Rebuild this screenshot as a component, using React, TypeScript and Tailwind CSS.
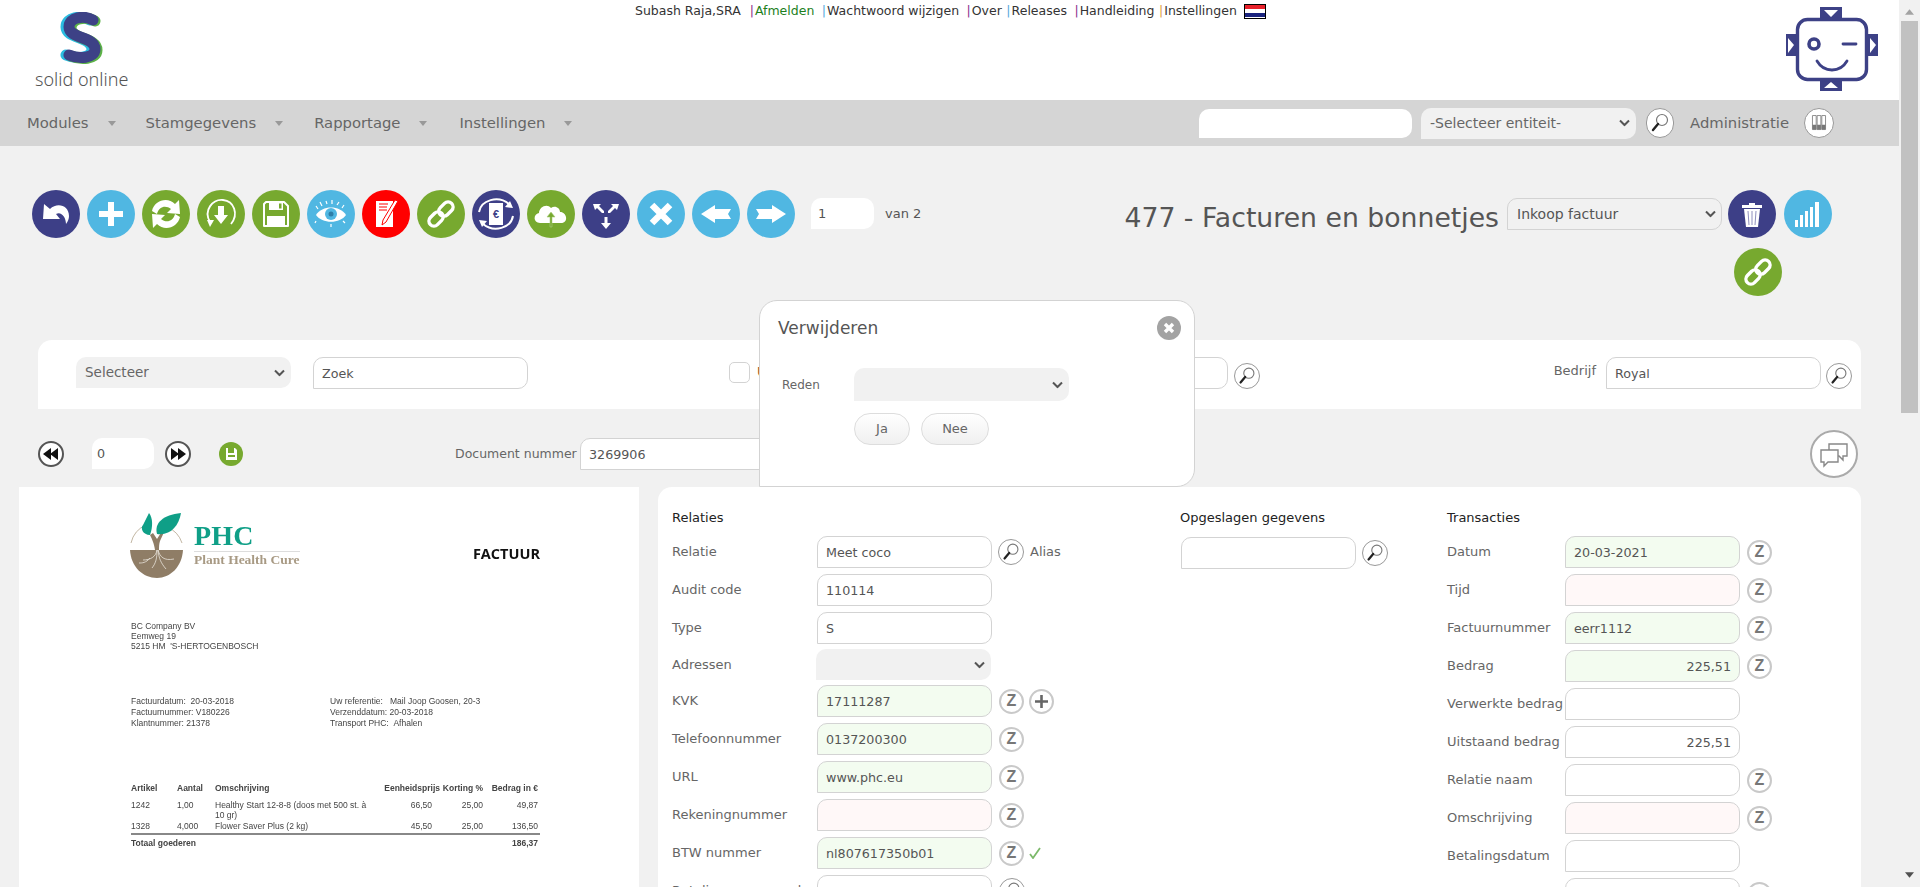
import type { ReactNode } from 'react'

const navy = 'bg-[#3d3f87]'
const blue = 'bg-[#50b7e2]'
const green = 'bg-[#77a92f]'

const Round = ({ bg, children }: { bg: string; children: ReactNode }) => (
	<div className={`w-12 h-12 shrink-0 rounded-full ${bg}`}>
		<svg viewBox="0 0 48 48" className="w-12 h-12">
			{children}
		</svg>
	</div>
)

const LinkGlyph = () => (
	<g transform="rotate(-45 24 24)" fill="none" stroke="#fff" strokeWidth="3.4">
		<rect x="9" y="19" width="16" height="10" rx="5" />
		<rect x="23" y="19" width="16" height="10" rx="5" />
	</g>
)

const toolbarIcons: { bg: string; glyph: ReactNode }[] = [
	{ bg: navy, glyph: <path fill="#fff" d="M11 29 L12 14 L18 19 C25 12 37 15 37 26 C37 29 36 31 34 34 C34 27 29 21 24 24 L28 29 Z" /> },
	{ bg: blue, glyph: <path fill="#fff" d="M21 12 H27 V21 H36 V27 H27 V36 H21 V27 H12 V21 H21 Z" /> },
	{
		bg: green,
		glyph: (
			<g fill="#fff">
				<path d="M10 21 C12 11 25 6 33 14 L37 10 L38 24 L25 23 L29 19 C24 15 17 16 15 24 Z" />
				<path d="M38 27 C36 37 23 42 15 34 L11 38 L10 24 L23 25 L19 29 C24 33 31 32 33 24 Z" />
			</g>
		),
	},
	{
		bg: green,
		glyph: (
			<g>
				<path d="M13 32 C6 20 16 9 26 10 C37 11 42 24 34 34" fill="none" stroke="#fff" strokeWidth="1.8" />
				<path d="M10 30 L17 30 L13 37 Z" fill="#fff" />
				<path d="M21 16 H27 V25 H31 L24 34 L17 25 H21 Z" fill="#fff" />
			</g>
		),
	},
	{
		bg: green,
		glyph: (
			<g>
				<path d="M14 12 H32 L36 16 V36 H12 V14 Z" fill="none" stroke="#fff" strokeWidth="2" strokeLinejoin="round" />
				<path d="M17 12 H31 V20 H17 Z M15 26 H33 V36 H15 Z" fill="#fff" />
				<rect x="27" y="13.5" width="2.5" height="5" fill="#77a92f" />
			</g>
		),
	},
	{
		bg: blue,
		glyph: (
			<g>
				<path d="M9 25 C15 15 33 15 39 25 C33 34 15 34 9 25 Z" fill="#fff" />
				<circle cx="24" cy="24" r="6" fill="#50b7e2" />
				<circle cx="24" cy="24" r="2.5" fill="#2f7fa8" />
				<path d="M11 19 L9 16 M15 16 L13 12 M20 14 L19 11 M25 14 L25 10 M30 15 L32 12 M35 18 L37 15 M9 31 L8 33 M24 34 L24 37 M36 31 L38 33" stroke="#fff" strokeWidth="1.2" />
			</g>
		),
	},
	{
		bg: 'bg-[#ff0000]',
		glyph: (
			<g>
				<path d="M14 11 H31 V37 H14 Z" fill="#fff" />
				<path d="M17 14 H26 M17 17 H25 M17 20 H25" stroke="#ff0000" strokeWidth="1.2" />
				<path d="M33 10 L36 11 L24 32 L20 35 L21 30 Z" fill="#fff" stroke="#ff0000" strokeWidth="1" />
			</g>
		),
	},
	{ bg: green, glyph: <LinkGlyph /> },
	{
		bg: navy,
		glyph: (
			<g>
				<path d="M7 22 C9 10 26 5 37 14 M41 26 C39 38 22 43 11 34" fill="none" stroke="#fff" strokeWidth="2" />
				<path d="M33 17 L41 18 L38 11 Z M15 31 L7 30 L10 37 Z" fill="#fff" />
				<path d="M17 13 H31 V35 H17 Z" fill="#fff" />
				<text x="24" y="28" textAnchor="middle" fontSize="11" fontWeight="700" fill="#3d3f87" fontFamily="'Liberation Sans', sans-serif">
					€
				</text>
			</g>
		),
	},
	{
		bg: green,
		glyph: (
			<g>
				<path d="M13 33 C6 33 6 24 12 23 C12 17 20 13 24 18 C28 15 33 18 33 22 C40 22 42 33 34 33 Z" fill="#fff" />
				<path d="M23 37 V27 H20 L24 22 L28 27 H25 V37 Z" fill="#77a92f" stroke="#a9cd7c" strokeWidth="0.6" />
			</g>
		),
	},
	{
		bg: navy,
		glyph: (
			<g fill="#fff">
				<path d="M11 14 H19 L17 16 L22 21 V23 H20 L15 18 L13 20 Z" />
				<path d="M37 14 H29 L31 16 L26 21 V23 H28 L33 18 L35 20 Z" />
				<path d="M22.5 27 H25.5 V33 H29 L24 39 L19 33 H22.5 Z" />
			</g>
		),
	},
	{
		bg: blue,
		glyph: (
			<g stroke="#fff" strokeWidth="6.5">
				<path d="M15 15 L33 33 M33 15 L15 33" />
			</g>
		),
	},
	{ bg: blue, glyph: <path fill="#fff" d="M9 24 L23 15 V19 H39 L36 24 L39 29 H23 V33 Z" /> },
	{ bg: blue, glyph: <path fill="#fff" d="M39 24 L25 15 V19 H9 L12 24 L9 29 H25 V33 Z" /> },
]

const SearchIcon = ({ className = 'w-[26px] h-[26px]' }: { className?: string }) => (
	<div className={`shrink-0 rounded-full border border-[#999] bg-white ${className}`}>
		<svg viewBox="0 0 26 26" className="w-full h-full">
			<circle cx="15" cy="10" r="5.5" fill="none" stroke="#777" strokeWidth="1.2" />
			<path d="M11 14 L6 20" stroke="#222" strokeWidth="2.4" strokeLinecap="round" />
		</svg>
	</div>
)

const ZIcon = () => (
	<div className="w-[25px] h-[25px] shrink-0 rounded-full border-2 border-[#c9c9c9] bg-white flex items-center justify-center font-['Liberation_Sans',sans-serif] text-[16px] leading-none font-bold text-[#777]">
		Z
	</div>
)

const PlusIcon = () => (
	<div className="w-[25px] h-[25px] shrink-0 rounded-full border-2 border-[#c9c9c9] bg-white">
		<svg viewBox="0 0 21 21" className="w-full h-full">
			<path d="M10.5 4 V17 M4 10.5 H17" stroke="#666" strokeWidth="2.6" />
		</svg>
	</div>
)

const Dropdown = ({
	value,
	className,
	textClass = 'text-[14px] text-[#666]',
	border = false,
}: {
	value?: string
	className: string
	textClass?: string
	border?: boolean
}) => (
	<div className={`relative shrink-0 ${className}`}>
		<select
			className={`appearance-none w-full h-full px-[9px] rounded-[10px] rounded-bl-none outline-none ${border ? 'border border-[#d3d3d3]' : 'bg-[#f1f1f1]'} ${textClass}`}
		>
			{value && <option>{value}</option>}
		</select>
		<svg viewBox="0 0 11 7" className="absolute right-[6px] top-1/2 -translate-y-1/2 w-[11px] h-[7px] pointer-events-none">
			<path d="M1 1 L5.5 5.5 L10 1" fill="none" stroke="#555" strokeWidth="2" />
		</svg>
	</div>
)

const Field = ({
	value = '',
	tone = 'white',
	right = false,
	className = 'w-[175px]',
}: {
	value?: string
	tone?: 'white' | 'green' | 'pink'
	right?: boolean
	className?: string
}) => {
	const bg = tone === 'green' ? 'bg-[#f3fcf0]' : tone === 'pink' ? 'bg-[#fff8f8]' : 'bg-white'
	return (
		<input
			readOnly
			value={value}
			className={`h-8 shrink-0 px-2 text-[12.7px] text-[#555] border border-[#d3d3d3] rounded-[10px] rounded-bl-none outline-none ${bg} ${right ? 'text-right' : ''} ${className}`}
		/>
	)
}

const Row = ({ label, labelWidth, children }: { label: string; labelWidth: string; children: ReactNode }) => (
	<div className="flex items-center h-8 mb-1.5">
		<span className={`shrink-0 text-[13px] text-[#666] whitespace-nowrap ${labelWidth}`}>{label}</span>
		{children}
	</div>
)

const Relaties = () => {
	const w = 'w-[145px]'
	return (
		<div className="w-[508px] shrink-0">
			<h3 className="h-5 mb-2 text-[13px] leading-5 text-[#222]">Relaties</h3>
			<Row label="Relatie" labelWidth={w}>
				<Field value="Meet coco" />
				<div className="ml-1.5">
					<SearchIcon />
				</div>
				<span className="ml-1.5 text-[13px] text-[#666]">Alias</span>
			</Row>
			<Row label="Audit code" labelWidth={w}>
				<Field value="110114" />
			</Row>
			<Row label="Type" labelWidth={w}>
				<Field value="S" />
			</Row>
			<div className="flex items-center h-[31px] -mt-px mb-[5px]">
				<span className={`shrink-0 text-[13px] text-[#666] ${w}`}>Adressen</span>
				<Dropdown className="w-[175px] h-[31px] -ml-px" />
			</div>
			<Row label="KVK" labelWidth={w}>
				<Field value="17111287" tone="green" />
				<div className="ml-[7px] flex gap-[5px]">
					<ZIcon />
					<PlusIcon />
				</div>
			</Row>
			{[
				{ label: 'Telefoonnummer', value: '0137200300', tone: 'green' as const },
				{ label: 'URL', value: 'www.phc.eu', tone: 'green' as const },
				{ label: 'Rekeningnummer', value: '', tone: 'pink' as const },
			].map((r) => (
				<Row key={r.label} label={r.label} labelWidth={w}>
					<Field value={r.value} tone={r.tone} />
					<div className="ml-[7px]">
						<ZIcon />
					</div>
				</Row>
			))}
			<Row label="BTW nummer" labelWidth={w}>
				<Field value="nl807617350b01" tone="green" />
				<div className="ml-[7px]">
					<ZIcon />
				</div>
				<svg viewBox="0 0 12 12" className="w-3 h-3 ml-[5px]">
					<path d="M1 7 L4 11 L11 1" fill="none" stroke="#7cb96a" strokeWidth="1.8" />
				</svg>
			</Row>
			<Row label="Betalingsvoorwaarde" labelWidth={w}>
				<Field />
				<div className="ml-[7px]">
					<SearchIcon />
				</div>
			</Row>
		</div>
	)
}

const transacties: { label: string; value?: string; tone?: 'green' | 'pink'; right?: boolean; z: boolean }[] = [
	{ label: 'Datum', value: '20-03-2021', tone: 'green', z: true },
	{ label: 'Tijd', tone: 'pink', z: true },
	{ label: 'Factuurnummer', value: 'eerr1112', tone: 'green', z: true },
	{ label: 'Bedrag', value: '225,51', tone: 'green', right: true, z: true },
	{ label: 'Verwerkte bedrag', z: false },
	{ label: 'Uitstaand bedrag', value: '225,51', right: true, z: false },
	{ label: 'Relatie naam', z: true },
	{ label: 'Omschrijving', tone: 'pink', z: true },
	{ label: 'Betalingsdatum', z: false },
	{ label: 'Vervaldatum', z: true },
]

const InvoicePreview = () => (
	<div className="w-[620px] shrink-0 bg-white pl-[112px] pt-[26px] font-['Liberation_Sans',sans-serif] text-[8.5px] leading-[10px] text-[#444] blur-[0.35px]">
		<div className="w-[409px] flex items-start">
			<svg viewBox="0 0 54 66" className="w-[54px] h-[66px] shrink-0 -ml-px">
				<path d="M1 30 A26 26 0 0 1 16 12 M37 14 A26 26 0 0 1 52 30" fill="none" stroke="#b3a38c" strokeWidth="0.8" />
				<path d="M0 37 H53 C52 54 40 65 27 65 C13 65 1 54 0 37 Z" fill="#8f7d66" />
				<path d="M25 37 C24 30 22 26 20 22 L23 20 L27 26 L34 15 L35 17 L30 28 C29 31 29 34 29 37 Z" fill="#8f7d66" />
				<path d="M20 22 C13 22 10 15 13 12 L19 0 C23 5 23 14 20 22 Z" fill="#0f9f87" />
				<path d="M27 21 C24 10 33 2 51 0 C49 13 40 23 27 21 Z" fill="#0f9f87" />
				<path d="M27 37 C26 44 20 47 13 47 M27 37 C27 45 26 50 22 55 M28 37 C30 44 34 48 44 46 M28 37 C29 46 31 50 36 56 M20 45 C16 50 12 50 9 50" fill="none" stroke="#e9e3da" strokeWidth="0.8" />
			</svg>
			<div className="ml-2.5 w-[106px] mt-2.5 font-['Liberation_Serif',serif] font-bold">
				<div className="text-[28px] leading-[25px] text-[#0f9f87] tracking-[0.2px]">PHC</div>
				<div className="mt-[3px] border-t border-[#ddd] text-[13.5px] leading-[15px] text-[#a89a84] whitespace-nowrap">
					Plant Health Cure
				</div>
			</div>
			<div className="ml-auto mt-[31px] font-['Open_Sans',sans-serif] font-bold text-[#111] text-[14.5px] leading-5">FACTUUR</div>
		</div>
		<div className="mt-[42px]">
			<div>BC Company BV</div>
			<div>Eemweg 19</div>
			<div>5215 HM &nbsp;'S-HERTOGENBOSCH</div>
		</div>
		<div className="mt-[45px] flex leading-[11px]">
			<div className="w-[199px]">
				<div>Factuurdatum: &nbsp;20-03-2018</div>
				<div>Factuurnummer: V180226</div>
				<div>Klantnummer: 21378</div>
			</div>
			<div>
				<div>Uw referentie: &nbsp; Mail Joop Goosen, 20-3</div>
				<div>Verzenddatum: 20-03-2018</div>
				<div>Transport PHC: &nbsp;Afhalen</div>
			</div>
		</div>
		<div className="mt-[54px] w-[409px]">
			<div className="grid grid-cols-[46px_38px_162px_63px_43px_55px] font-bold mb-[7px]">
				<span>Artikel</span>
				<span>Aantal</span>
				<span>Omschrijving</span>
				<span className="text-right whitespace-nowrap">Eenheidsprijs</span>
				<span className="text-right whitespace-nowrap">Korting %</span>
				<span className="text-right whitespace-nowrap">Bedrag in €</span>
			</div>
			<div className="grid grid-cols-[46px_38px_162px_63px_43px_55px]">
				<span>1242</span>
				<span>1,00</span>
				<span>Healthy Start 12-8-8 (doos met 500 st. à 10 gr)</span>
				<span className="text-right pr-2">66,50</span>
				<span className="text-right">25,00</span>
				<span className="text-right">49,87</span>
				<span className="mt-px">1328</span>
				<span className="mt-px">4,000</span>
				<span className="mt-px">Flower Saver Plus (2 kg)</span>
				<span className="mt-px text-right pr-2">45,50</span>
				<span className="mt-px text-right">25,00</span>
				<span className="mt-px text-right">136,50</span>
			</div>
			<div className="mt-0.5 border-t-2 border-[#888] pt-[3px] pr-0.5 flex justify-between font-bold">
				<span>Totaal goederen</span>
				<span>186,37</span>
			</div>
		</div>
	</div>
)

const Modal = () => (
	<div className="absolute left-[759px] top-[300px] w-[436px] h-[187px] bg-white border border-[#d3d3d3] rounded-[18px] rounded-bl-none">
		<div className="flex items-center justify-between pt-[13px] pl-[18px] pr-[13px]">
			<h2 className="text-[17px] leading-7 text-[#555]">Verwijderen</h2>
			<div className="w-6 h-6 rounded-full bg-[#a3a3a3]">
				<svg viewBox="0 0 24 24" className="w-6 h-6">
					<path d="M8 8 L16 16 M16 8 L8 16" stroke="#fff" strokeWidth="3.4" />
				</svg>
			</div>
		</div>
		<div className="mt-[26px] flex items-center">
			<span className="w-[94px] pl-[22px] text-[12px] text-[#666]">Reden</span>
			<Dropdown className="w-[215px] h-[33px]" />
		</div>
		<div className="ml-[94px] mt-3 flex gap-[11px]">
			<button className="w-14 h-8 rounded-full border border-[#ddd] bg-gradient-to-b from-white to-[#f0f0f0] text-[13px] text-[#666]">Ja</button>
			<button className="w-[68px] h-8 rounded-full border border-[#ddd] bg-gradient-to-b from-white to-[#f0f0f0] text-[13px] text-[#666]">Nee</button>
		</div>
	</div>
)

const Seek = ({ flip = false }: { flip?: boolean }) => (
	<div className="w-[26px] h-[26px] shrink-0 rounded-full border-2 border-[#555] bg-white">
		<svg viewBox="0 0 22 22" className={`w-full h-full ${flip ? 'rotate-180' : ''}`}>
			<path d="M3 11 L11 5 V17 Z M10 11 L18 5 V17 Z" fill="#111" />
		</svg>
	</div>
)

const menu = [
	{ name: 'Modules', ml: 'ml-[27px]' },
	{ name: 'Stamgegevens', ml: 'ml-[30px]' },
	{ name: 'Rapportage', ml: 'ml-[31px]' },
	{ name: 'Instellingen', ml: 'ml-[32px]' },
]

const logoPath = 'M33 8 C24 3 9 5 9 15 C9 27 35 24 35 37 C35 47 18 47 9 43'

export default function App() {
	return (
		<div className="relative flex h-[887px] w-[1920px] overflow-hidden bg-[#f1f1f1] font-['DejaVu_Sans',sans-serif] text-[#555]">
			<div className="w-[1899px] shrink-0">
				<header className="h-[100px] bg-white flex items-start">
					<div className="ml-[35px] w-[92px] shrink-0 pt-3">
						<svg viewBox="0 0 44 53" className="w-11 h-[53px] ml-[25px]">
							<g fill="none" strokeWidth="11" strokeLinecap="round">
								<path transform="translate(-3 0)" stroke="#2bbce0" d={logoPath} />
								<path transform="translate(2 1)" stroke="#5cb247" d={logoPath} />
								<path stroke="#3d4186" d={logoPath} />
							</g>
						</svg>
						<div className="text-[18px] leading-[22px] mt-[3px] whitespace-nowrap text-[#555] font-['Noto_Sans',sans-serif] font-light">solid online</div>
					</div>
					<nav className="ml-[508px] mt-[3px] flex items-center text-[12.5px] leading-4 text-[#333] whitespace-nowrap">
						<span>Subash Raja,SRA</span>
						<span className="ml-[9px] mr-px text-[#8b2f8b]">|</span>
						<span className="text-[#1d7f1d]">Afmelden</span>
						<span className="ml-[7.5px] mr-px text-[#53a7dc]">|</span>
						<span>Wachtwoord wijzigen</span>
						<span className="ml-[7.5px] mr-px text-[#8b2f8b]">|</span>
						<span>Over</span>
						<span className="ml-[4.5px] mr-px text-[#53a7dc]">|</span>
						<span>Releases</span>
						<span className="ml-[7.5px] mr-px text-[#8b2f8b]">|</span>
						<span>Handleiding</span>
						<span className="ml-[4.5px] mr-px text-[#e09a3a]">|</span>
						<span>Instellingen</span>
						<span className="ml-[7.5px] flex flex-col w-[22px] h-[15px] border border-black">
							<span className="flex-1 bg-[#e8212b]" />
							<span className="flex-1 bg-white" />
							<span className="flex-1 bg-[#1a237e]" />
						</span>
					</nav>
					<svg viewBox="0 0 92 85" className="w-[92px] h-[85px] ml-auto mr-[21px] mt-[7px] shrink-0">
						<g fill="#3d4186">
							<path d="M34 0 H56 V11 H34 Z M0 27 H10 V49 H0 Z M82 27 H92 V49 H82 Z M34 73 H56 V84 H34 Z" />
						</g>
						<g fill="#fff">
							<path d="M38 3 H52 L45 10 Z M2 31 L8 38 L2 46 Z M90 38 L84 31 V46 Z M38 81 H52 L45 75 Z" />
						</g>
						<rect x="11.5" y="12.5" width="69" height="60" rx="10" fill="#fff" stroke="#3d4186" strokeWidth="3.4" />
						<circle cx="28" cy="37" r="5" fill="none" stroke="#3d4186" strokeWidth="3.6" />
						<path d="M57 37 H70" stroke="#3d4186" strokeWidth="2.8" strokeLinecap="round" />
						<path d="M31 54 C38 66 54 66 61 54" fill="none" stroke="#3d4186" strokeWidth="2.8" strokeLinecap="round" />
					</svg>
				</header>

				<div className="h-[46px] bg-[#d5d5d5] flex items-center text-[14.8px] text-[#666] whitespace-nowrap">
					{menu.map((m) => (
						<div key={m.name} className={`flex items-center ${m.ml}`}>
							<span>{m.name}</span>
							<svg viewBox="0 0 8 5" className="w-2 h-[5px] ml-[19px]">
								<path d="M0 0 H8 L4 5 Z" fill="#999" />
							</svg>
						</div>
					))}
					<input readOnly className="ml-auto w-[213px] h-[29px] bg-white rounded-[10px] rounded-bl-none outline-none" />
					<Dropdown value="-Selecteer entiteit-" className="ml-[9px] w-[215px] h-[31px]" />
					<div className="ml-[10px]">
						<SearchIcon className="w-[28px] h-[30px]" />
					</div>
					<span className="ml-4">Administratie</span>
					<div className="ml-[15px] mr-[65px] w-[30px] h-[30px] rounded-full border border-[#999] bg-white">
						<svg viewBox="0 0 30 30" className="w-full h-full">
							<path d="M8 7 H12 V22 H8 Z M13 7 H17 V22 H13 Z M18 7 H22 V22 H18 Z" fill="none" stroke="#888" strokeWidth="1" />
							<path d="M8 17 H12 V22 H8 Z M13 17 H17 V22 H13 Z M18 17 H22 V22 H18 Z" fill="#777" />
						</svg>
					</div>
				</div>

				<section className="h-[194px] pt-[44px] pl-8 pr-[67px] flex items-start">
					<div className="flex gap-[7px]">
						{toolbarIcons.map((icon, i) => (
							<Round key={i} bg={icon.bg}>
								{icon.glyph}
							</Round>
						))}
					</div>
					<input readOnly value="1" className="ml-4 mt-2 w-[63px] h-[31px] px-[7px] bg-white rounded-[10px] rounded-bl-none text-[13px] text-[#555] outline-none" />
					<span className="ml-[11px] mt-4 text-[13px] leading-4">van 2</span>
					<div className="ml-auto flex flex-col">
						<div className="flex items-start">
							<h1 className="mt-2.5 text-[26.7px] leading-9 whitespace-nowrap text-[#555]">477 - Facturen en bonnetjes</h1>
							<Dropdown value="Inkoop factuur" border textClass="text-[14px] text-[#555]" className="ml-2 mt-2 w-[215px] h-8" />
							<div className="ml-1.5">
								<Round bg={navy}>
									<g>
										<path d="M14 15 H34 V18 H14 Z M21 13 H27 V15 H21 Z" fill="#fff" />
										<path d="M16 19 H32 L30 37 H18 Z" fill="#fff" />
										<path d="M20 21 L21 35 M24 21 V35 M28 21 L27 35" stroke="#8f90bd" strokeWidth="1" />
									</g>
								</Round>
							</div>
							<div className="ml-2">
								<Round bg={blue}>
									<path d="M11 30 H14 V37 H11 Z M16 25 H19 V37 H16 Z M21 21 H24 V37 H21 Z M26 17 H29 V37 H26 Z M31 12 H35 V37 H31 Z" fill="#fff" />
								</Round>
							</div>
						</div>
						<div className="mt-2.5 self-end mr-[50px]">
							<Round bg={green}>
								<LinkGlyph />
							</Round>
						</div>
					</div>
				</section>

				<section className="ml-[38px] w-[1823px] h-[69px] bg-white rounded-t-[14px] flex items-start pt-[17px] text-[13px]">
					<Dropdown value="Selecteer" textClass="text-[13.5px] text-[#666]" className="ml-[38px] w-[215px] h-[31px]" />
					<Field value="Zoek" className="ml-[22px] w-[215px]" />
					<div className="ml-[201px] mt-[5px] w-[21px] h-[21px] rounded-[5px] border border-[#d3d3d3] bg-white" />
					<span className="ml-[7px] mt-[5px] text-[#a8582b]">Uitgesloten</span>
					<input readOnly className="ml-auto w-[220px] h-[32px] border border-[#d3d3d3] rounded-[10px] rounded-bl-none outline-none" />
					<div className="ml-1.5 mt-1.5">
						<SearchIcon />
					</div>
					<span className="ml-[294px] mt-1 text-[#666]">Bedrijf</span>
					<Field value="Royal" className="ml-[10px] w-[215px]" />
					<div className="ml-[5px] mr-[9px] mt-1.5">
						<SearchIcon />
					</div>
				</section>

				<section className="h-[78px] pl-[38px] pr-[41px] flex items-start pt-[29px]">
					<div className="mt-[3px]">
						<Seek />
					</div>
					<input readOnly value="0" className="ml-[28px] w-[62px] h-[31px] px-[5px] bg-white rounded-[10px] rounded-bl-none text-[12.7px] text-[#555] outline-none" />
					<div className="ml-[11px] mt-[3px]">
						<Seek flip />
					</div>
					<div className="ml-[28px] mt-1 w-6 h-6 rounded-full bg-[#77a92f]">
						<svg viewBox="0 0 24 24" className="w-6 h-6">
							<path d="M7 6 H16 L18 8 V18 H7 Z" fill="#fff" />
							<path d="M9 6 H15 V11 H9 Z M9 13 H16 V15 H9 Z" fill="#77a92f" />
						</svg>
					</div>
					<span className="ml-[212px] mt-[7px] w-[121px] text-[12.5px] text-[#666] whitespace-nowrap">Document nummer</span>
					<Field value="3269906" className="ml-1 w-[190px]" />
					<div className="ml-auto -mt-2 w-12 h-12 rounded-full border-2 border-[#aaa] bg-white">
						<svg viewBox="0 0 44 44" className="w-full h-full">
							<path d="M17 12 H35 V24 H31 V28 L27 24 H17 Z" fill="#fff" stroke="#888" strokeWidth="1.4" />
							<path d="M9 18 H26 V30 H16 L12 34 V30 H9 Z" fill="#fff" stroke="#888" strokeWidth="1.4" />
						</svg>
					</div>
				</section>

				<section className="ml-[19px] flex gap-[19px] h-[400px] items-stretch">
					<InvoicePreview />
					<div className="w-[1203px] bg-white rounded-t-[14px] pl-[14px] pt-[21px] flex">
						<Relaties />
						<div className="w-[267px] shrink-0">
							<h3 className="h-5 mb-[9px] text-[13px] leading-5 text-[#222]">Opgeslagen gegevens</h3>
							<div className="flex items-center gap-1.5 pl-px">
								<Field />
								<SearchIcon />
							</div>
						</div>
						<div>
							<h3 className="h-5 mb-2 text-[13px] leading-5 text-[#222]">Transacties</h3>
							{transacties.map((t) => (
								<Row key={t.label} label={t.label} labelWidth="w-[118px]">
									<Field value={t.value} tone={t.tone} right={t.right} />
									{t.z && (
										<div className="ml-[7px]">
											<ZIcon />
										</div>
									)}
								</Row>
							))}
						</div>
					</div>
				</section>
			</div>

			<aside className="w-[21px] shrink-0 bg-[#f1f1f1] relative">
				<svg viewBox="0 0 10 6" className="absolute left-[6px] top-[9px] w-[9px] h-[6px]">
					<path d="M5 0 L10 6 H0 Z" fill="#a3a3a3" />
				</svg>
				<div className="absolute left-[2px] top-[21px] w-[17px] h-[392px] bg-[#c1c1c1]" />
				<svg viewBox="0 0 10 6" className="absolute left-[6px] bottom-[9px] w-[9px] h-[6px]">
					<path d="M0 0 H10 L5 6 Z" fill="#505050" />
				</svg>
			</aside>

			<Modal />
		</div>
	)
}
